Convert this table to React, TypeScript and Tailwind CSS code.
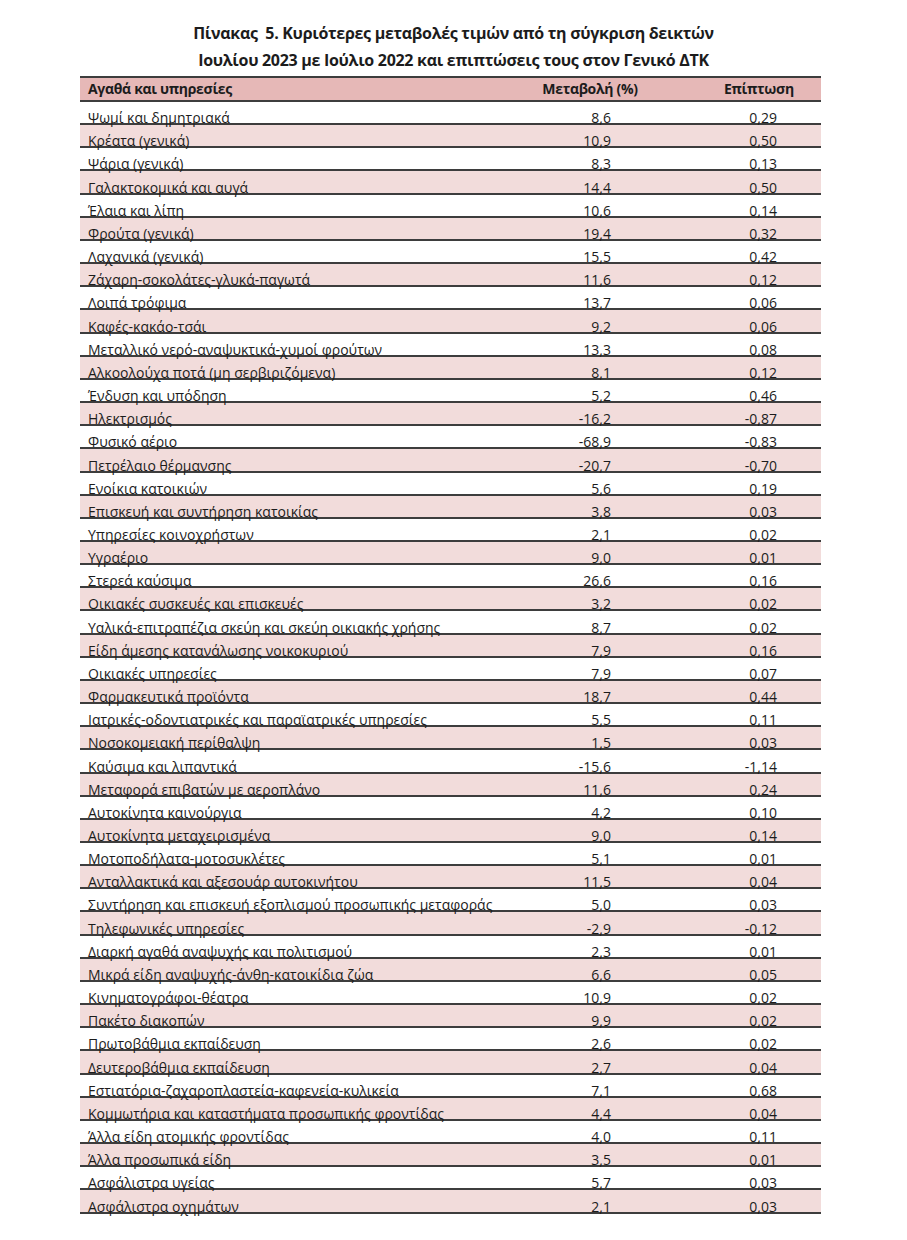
const rows: [string, string, string][] = [
  ["Ψωμί και δημητριακά", "8,6", "0,29"],
  ["Κρέατα (γενικά)", "10,9", "0,50"],
  ["Ψάρια (γενικά)", "8,3", "0,13"],
  ["Γαλακτοκομικά και αυγά", "14,4", "0,50"],
  ["Έλαια και λίπη", "10,6", "0,14"],
  ["Φρούτα (γενικά)", "19,4", "0,32"],
  ["Λαχανικά (γενικά)", "15,5", "0,42"],
  ["Ζάχαρη-σοκολάτες-γλυκά-παγωτά", "11,6", "0,12"],
  ["Λοιπά τρόφιμα", "13,7", "0,06"],
  ["Καφές-κακάο-τσάι", "9,2", "0,06"],
  ["Μεταλλικό νερό-αναψυκτικά-χυμοί φρούτων", "13,3", "0,08"],
  ["Αλκοολούχα ποτά (μη σερβιριζόμενα)", "8,1", "0,12"],
  ["Ένδυση και υπόδηση", "5,2", "0,46"],
  ["Ηλεκτρισμός", "-16,2", "-0,87"],
  ["Φυσικό αέριο", "-68,9", "-0,83"],
  ["Πετρέλαιο θέρμανσης", "-20,7", "-0,70"],
  ["Ενοίκια κατοικιών", "5,6", "0,19"],
  ["Επισκευή και συντήρηση κατοικίας", "3,8", "0,03"],
  ["Υπηρεσίες κοινοχρήστων", "2,1", "0,02"],
  ["Υγραέριο", "9,0", "0,01"],
  ["Στερεά καύσιμα", "26,6", "0,16"],
  ["Οικιακές συσκευές και επισκευές", "3,2", "0,02"],
  ["Υαλικά-επιτραπέζια σκεύη και σκεύη οικιακής χρήσης", "8,7", "0,02"],
  ["Είδη άμεσης κατανάλωσης νοικοκυριού", "7,9", "0,16"],
  ["Οικιακές υπηρεσίες", "7,9", "0,07"],
  ["Φαρμακευτικά προϊόντα", "18,7", "0,44"],
  ["Ιατρικές-οδοντιατρικές και παραϊατρικές υπηρεσίες", "5,5", "0,11"],
  ["Νοσοκομειακή περίθαλψη", "1,5", "0,03"],
  ["Καύσιμα και λιπαντικά", "-15,6", "-1,14"],
  ["Μεταφορά επιβατών με αεροπλάνο", "11,6", "0,24"],
  ["Αυτοκίνητα καινούργια", "4,2", "0,10"],
  ["Αυτοκίνητα μεταχειρισμένα", "9,0", "0,14"],
  ["Μοτοποδήλατα-μοτοσυκλέτες", "5,1", "0,01"],
  ["Ανταλλακτικά και αξεσουάρ αυτοκινήτου", "11,5", "0,04"],
  ["Συντήρηση και επισκευή εξοπλισμού προσωπικής μεταφοράς", "5,0", "0,03"],
  ["Τηλεφωνικές υπηρεσίες", "-2,9", "-0,12"],
  ["Διαρκή αγαθά αναψυχής και πολιτισμού", "2,3", "0,01"],
  ["Μικρά είδη αναψυχής-άνθη-κατοικίδια ζώα", "6,6", "0,05"],
  ["Κινηματογράφοι-θέατρα", "10,9", "0,02"],
  ["Πακέτο διακοπών", "9,9", "0,02"],
  ["Πρωτοβάθμια εκπαίδευση", "2,6", "0,02"],
  ["Δευτεροβάθμια εκπαίδευση", "2,7", "0,04"],
  ["Εστιατόρια-ζαχαροπλαστεία-καφενεία-κυλικεία", "7,1", "0,68"],
  ["Κομμωτήρια και καταστήματα προσωπικής φροντίδας", "4,4", "0,04"],
  ["Άλλα είδη ατομικής φροντίδας", "4,0", "0,11"],
  ["Άλλα προσωπικά είδη", "3,5", "0,01"],
  ["Ασφάλιστρα υγείας", "5,7", "0,03"],
  ["Ασφάλιστρα οχημάτων", "2,1", "0,03"],
];

export default function App() {
  return (
    <div
      className="w-[907px] h-[1240px] bg-white text-[#1c1c1c] pt-[20px]"
      style={{ fontFamily: "'Open Sans', 'Noto Sans', sans-serif" }}
    >
      {/* Title */}
      <div className="text-center font-bold text-[16px] leading-[27px] tracking-[-0.3px]">
        <p>Πίνακας&nbsp; 5. Κυριότερες μεταβολές τιμών από τη σύγκριση δεικτών</p>
        <p>Ιουλίου 2023 με Ιούλιο 2022 και επιπτώσεις τους στον Γενικό ΔΤΚ</p>
      </div>

      {/* Table */}
      <div className="ml-[80px] w-[741px] mt-[2px] border-t-2 border-[#3d3d3d] text-[14px]">
        <div className="flex items-end h-[24px] bg-[#e6b8b7] border-b-2 border-[#3d3d3d] font-bold pb-[1px] tracking-[-0.3px]">
          <div className="w-[440px] pl-[8px]">Αγαθά και υπηρεσίες</div>
          <div className="w-[140px] text-center">Μεταβολή (%)</div>
          <div className="ml-[64px]">Επίπτωση</div>
        </div>
        {rows.map(([name, change, impact], i) => (
          <div
            key={i}
            className={`flex items-end h-[23.17px] border-b-2 border-[#3d3d3d] leading-[16px] ${
              i % 2 === 1 ? "bg-[#f2dcdb]" : "bg-white"
            }`}
          >
            <div className="w-[450px] pl-[8px] -mb-[3px]">{name}</div>
            <div className="w-[81px] text-right -mb-[3px]">{change}</div>
            <div className="w-[166px] text-right -mb-[3px]">{impact}</div>
          </div>
        ))}
      </div>
    </div>
  );
}
